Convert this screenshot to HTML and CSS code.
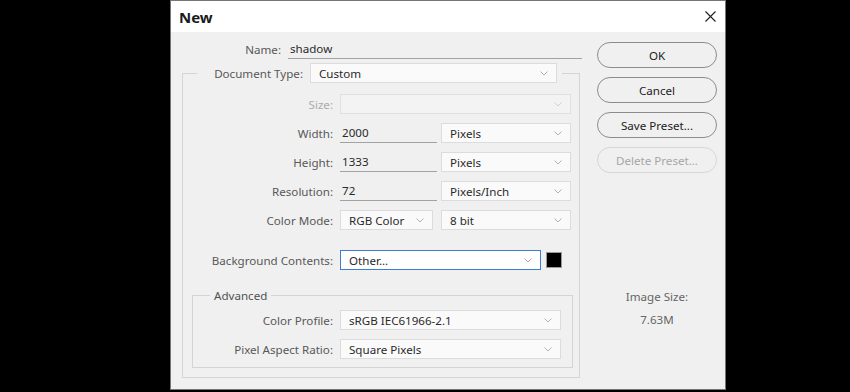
FILE: index.html
```html
<!DOCTYPE html>
<html lang="en">
<head>
    <meta charset="UTF-8">
    <title>New</title>
    <link rel="stylesheet" href="styles.css">
</head>
<body>
    <div class="dialog">
        <div class="titlebar">
            <span class="title">New</span>
            <svg class="close" width="11" height="11" viewBox="0 0 11 11">
                <path d="M0.5 0.5 L10.5 10.5 M10.5 0.5 L0.5 10.5" stroke="#1e1e1e" stroke-width="1.1" fill="none"/>
            </svg>
        </div>
        <div class="content">
            <div class="main">
                <div class="name-row">
                    <span class="label">Name:</span>
                    <div class="line-input name-input">shadow</div>
                </div>

                <fieldset class="group">
                    <legend class="group-legend">
                        <span class="label legend-label">Document Type:</span>
                        <div class="select doc-type"><span>Custom</span><svg class="chev" width="8" height="5" viewBox="0 0 8 5"><path d="M0.5 0.5 L4 4 L7.5 0.5" stroke="#b2b2b2" fill="none"/></svg></div>
                    </legend>

                    <div class="row">
                        <span class="label disabled">Size:</span>
                        <div class="select disabled wide"><span></span><svg class="chev" width="8" height="5" viewBox="0 0 8 5"><path d="M0.5 0.5 L4 4 L7.5 0.5" stroke="#d0d0d0" fill="none"/></svg></div>
                    </div>
                    <div class="row">
                        <span class="label">Width:</span>
                        <div class="line-input short">2000</div>
                        <div class="select unit"><span>Pixels</span><svg class="chev" width="8" height="5" viewBox="0 0 8 5"><path d="M0.5 0.5 L4 4 L7.5 0.5" stroke="#b2b2b2" fill="none"/></svg></div>
                    </div>
                    <div class="row">
                        <span class="label">Height:</span>
                        <div class="line-input short">1333</div>
                        <div class="select unit"><span>Pixels</span><svg class="chev" width="8" height="5" viewBox="0 0 8 5"><path d="M0.5 0.5 L4 4 L7.5 0.5" stroke="#b2b2b2" fill="none"/></svg></div>
                    </div>
                    <div class="row">
                        <span class="label">Resolution:</span>
                        <div class="line-input short">72</div>
                        <div class="select unit"><span>Pixels/Inch</span><svg class="chev" width="8" height="5" viewBox="0 0 8 5"><path d="M0.5 0.5 L4 4 L7.5 0.5" stroke="#b2b2b2" fill="none"/></svg></div>
                    </div>
                    <div class="row">
                        <span class="label">Color Mode:</span>
                        <div class="select mode"><span>RGB Color</span><svg class="chev" width="8" height="5" viewBox="0 0 8 5"><path d="M0.5 0.5 L4 4 L7.5 0.5" stroke="#b2b2b2" fill="none"/></svg></div>
                        <div class="select unit"><span>8 bit</span><svg class="chev" width="8" height="5" viewBox="0 0 8 5"><path d="M0.5 0.5 L4 4 L7.5 0.5" stroke="#b2b2b2" fill="none"/></svg></div>
                    </div>
                    <div class="row bg-row">
                        <span class="label">Background Contents:</span>
                        <div class="select focused bg-select"><span>Other...</span><svg class="chev" width="8" height="5" viewBox="0 0 8 5"><path d="M0.5 0.5 L4 4 L7.5 0.5" stroke="#c09aa6" fill="none"/></svg></div>
                        <div class="swatch"></div>
                    </div>

                    <fieldset class="group advanced">
                        <legend class="adv-legend">Advanced</legend>
                        <div class="row">
                            <span class="label adv-label">Color Profile:</span>
                            <div class="select profile"><span>sRGB IEC61966-2.1</span><svg class="chev" width="8" height="5" viewBox="0 0 8 5"><path d="M0.5 0.5 L4 4 L7.5 0.5" stroke="#b2b2b2" fill="none"/></svg></div>
                        </div>
                        <div class="row last">
                            <span class="label adv-label">Pixel Aspect Ratio:</span>
                            <div class="select profile"><span>Square Pixels</span><svg class="chev" width="8" height="5" viewBox="0 0 8 5"><path d="M0.5 0.5 L4 4 L7.5 0.5" stroke="#b2b2b2" fill="none"/></svg></div>
                        </div>
                    </fieldset>
                </fieldset>
            </div>

            <div class="side">
                <button class="btn">OK</button>
                <button class="btn">Cancel</button>
                <button class="btn">Save Preset...</button>
                <button class="btn disabled">Delete Preset...</button>
                <div class="image-size">
                    <div class="size-label">Image Size:</div>
                    <div class="size-value">7.63M</div>
                </div>
            </div>
        </div>
    </div>
</body>
</html>
```

FILE: styles.css
```css
body {
    margin: 0;
    background-color: #000000;
    font-family: "Noto Sans", "Open Sans", sans-serif;
    font-size: 11.6px;
    color: #505050;
    height: 392px;
    overflow: hidden;
}
.dialog {
    margin-left: 170px;
    width: 556px;
    height: 390px;
    box-sizing: border-box;
    border: 1px solid #767676;
    background-color: #f0f0f0;
}
.titlebar {
    height: 31px;
    background-color: #ffffff;
    display: flex;
    align-items: center;
    justify-content: space-between;
    padding: 0 9px 0 8px;
}
.title {
    font-weight: bold;
    font-size: 15px;
    color: #1a1a1a;
}
.close {
    display: block;
}
.content {
    display: flex;
}
.main {
    width: 420px;
    padding-top: 7px;
}
.label {
    text-align: right;
    white-space: nowrap;
    color: #585858;
}
.label.disabled {
    color: #ababab;
}
.name-row {
    display: flex;
    align-items: center;
    height: 20px;
}
.name-row .label {
    width: 110px;
    margin-right: 7px;
}
.line-input {
    height: 20px;
    box-sizing: border-box;
    border-bottom: 1px solid #a2a2a2;
    padding-left: 2px;
    line-height: 19px;
    color: #2a2a2a;
}
.name-input {
    width: 294px;
}
.line-input.short {
    width: 97px;
    margin-right: 4px;
}
.group {
    margin: 4px 0 0 11px;
    width: 398px;
    box-sizing: border-box;
    border: 1px solid #d4d4d4;
    padding: 11px 0 9px 0;
    min-inline-size: auto;
}
.group-legend {
    display: flex;
    align-items: center;
    margin-left: 14px;
    padding: 0 5px 0 15px;
}
.legend-label {
    width: 91px;
    margin-right: 7px;
}
.row {
    display: flex;
    align-items: center;
    height: 20px;
    margin-bottom: 9px;
}
.row .label {
    width: 150px;
    margin-right: 7px;
}
.row.last {
    margin-bottom: 0;
}
.select {
    height: 20px;
    box-sizing: border-box;
    border: 1px solid #dcdcdc;
    background-color: #fafafa;
    display: flex;
    align-items: center;
    justify-content: space-between;
    padding: 0 8px 0 8px;
    color: #2a2a2a;
}
.select.disabled {
    background-color: #f3f3f3;
    border-color: #e0e0e0;
}
.select.focused {
    border-color: #3f7dd0;
    background-color: #ffffff;
}
.chev {
    display: block;
    flex-shrink: 0;
}
.doc-type {
    width: 247px;
}
.wide {
    width: 231px;
}
.unit {
    width: 130px;
}
.mode {
    width: 93px;
    margin-right: 8px;
}
.bg-row {
    margin-top: 20px;
    margin-bottom: 0;
}
.bg-select {
    width: 201px;
    margin-right: 5px;
}
.swatch {
    width: 14px;
    height: 14px;
    background-color: #000000;
    border: 1px solid #9a9a9a;
}
.advanced {
    margin: 17px 0 0 9px;
    width: 381px;
    padding: 6px 0 8px 0;
}
.adv-legend {
    margin-left: 17px;
    padding: 0 4px;
    line-height: 17px;
    color: #505050;
}
.row .adv-label {
    width: 140px;
}
.profile {
    width: 221px;
}
.side {
    margin-left: 6px;
    width: 120px;
    padding-top: 10px;
    display: flex;
    flex-direction: column;
}
.btn {
    width: 120px;
    height: 26px;
    margin-bottom: 9px;
    border: 1px solid #8c8c8c;
    border-radius: 13px;
    background-color: #f0f0f0;
    font-family: inherit;
    font-size: 11.6px;
    color: #222222;
    padding: 0;
}
.btn.disabled {
    border-color: #d6d6d6;
    color: #a6a6a6;
}
.image-size {
    margin-top: 107px;
    text-align: center;
    color: #666666;
}
.size-label {
    line-height: 16px;
}
.size-value {
    line-height: 16px;
    margin-top: 7px;
}
```
